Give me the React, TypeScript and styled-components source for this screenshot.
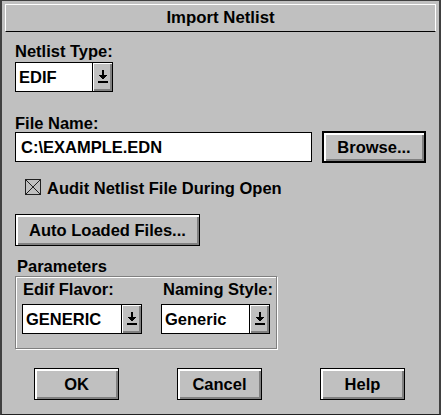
import React from "react";
import styled, { createGlobalStyle } from "styled-components";

const Global = createGlobalStyle`
  html, body { margin: 0; padding: 0; background: #c0c0c0; }
  * { box-sizing: border-box; }
`;

const Window = styled.div`
  width: 441px;
  height: 415px;
  background: #c0c0c0;
  border-top: 1px solid #404040;
  border-bottom: 1px solid #202020;
  border-left: 2px solid #404040;
  border-right: 2px solid #404040;
  font-family: "Liberation Sans", Arial, sans-serif;
  font-weight: bold;
  font-size: 16.5px;
  line-height: 18px;
  color: #000;
  display: flex;
  flex-direction: column;
`;

const TitleBar = styled.div`
  margin: 3px 3px 0 3px;
  height: 28px;
  border-top: 1px solid #fff;
  border-left: 1px solid #fff;
  border-right: 1px solid #fff;
  border-bottom: 1px solid #000;
  display: flex;
  align-items: center;
  justify-content: center;
  font-size: 16.8px;
`;

const Content = styled.div`
  display: flex;
  flex-direction: column;
  align-items: flex-start;
  padding-left: 13px;
`;

const Label = styled.div<{ $mt?: number; $ml?: number }>`
  margin-top: ${(p) => p.$mt ?? 0}px;
  margin-left: ${(p) => p.$ml ?? 0}px;
  height: 18px;
  white-space: nowrap;
`;

const SelectBox = styled.div<{ $w: number; $mt?: number }>`
  width: ${(p) => p.$w}px;
  height: 30px;
  margin-top: ${(p) => p.$mt ?? 0}px;
  border: 1px solid #000;
  background: #fff;
  display: flex;
`;

const SelectText = styled.div`
  flex: 1;
  padding-left: 3px;
  display: flex;
  align-items: center;
  white-space: nowrap;
`;

const SelectButton = styled.div`
  width: 20px;
  border-left: 1px solid #000;
  background: #c0c0c0;
  box-shadow: inset 1px 1px 0 #fff, inset -2px -2px 0 #808080;
  display: flex;
  align-items: center;
  justify-content: center;
  padding-bottom: 1px;
`;

const Row = styled.div<{ $mt?: number }>`
  display: flex;
  align-items: center;
  margin-top: ${(p) => p.$mt ?? 0}px;
`;

const TextField = styled.div`
  width: 297px;
  height: 30px;
  border: 1px solid #000;
  background: #fff;
  padding-left: 5px;
  display: flex;
  align-items: center;
`;

const Button = styled.div<{ $w: number; $default?: boolean; $mt?: number; $ml?: number }>`
  width: ${(p) => p.$w}px;
  height: 32px;
  margin-top: ${(p) => p.$mt ?? 0}px;
  margin-left: ${(p) => p.$ml ?? 0}px;
  border: ${(p) => (p.$default ? 2 : 1)}px solid #000;
  background: #c0c0c0;
  box-shadow: inset 1px 1px 0 #fff, inset 2px 2px 0 #fff, inset -2px -2px 0 #808080;
  display: flex;
  align-items: center;
  justify-content: center;
  white-space: nowrap;
`;

const CheckRow = styled.div`
  display: flex;
  align-items: flex-start;
  gap: 6px;
  margin-top: 16px;
  margin-left: 10px;
  height: 18px;
`;

const GroupBox = styled.div`
  margin-top: 1px;
  width: 262px;
  height: 73px;
  border: 1px solid #808080;
  box-shadow: inset 1px 1px 0 #fff, 1px 1px 0 #fff;
  padding: 3px 0 0 6px;
  display: flex;
  gap: 19px;
`;

const Column = styled.div`
  display: flex;
  flex-direction: column;
`;

const ButtonRow = styled.div`
  display: flex;
  gap: 58px;
  margin-top: 19px;
  margin-left: 19px;
`;

const Arrow = () => (
  <svg width="10" height="13" viewBox="0 0 10 13" shapeRendering="crispEdges">
    <rect x="4" y="0" width="2" height="5" fill="#000" />
    <polygon points="0.5,5 9.5,5 5,9.5" fill="#000" />
    <rect x="0" y="11" width="10" height="1.5" fill="#000" />
  </svg>
);

const CheckGlyph = () => (
  <svg width="16" height="16" viewBox="0 0 16 16" shapeRendering="crispEdges">
    <rect x="0.5" y="0.5" width="15" height="15" fill="none" stroke="#202020" strokeWidth="1" />
    <line x1="1" y1="1" x2="15" y2="15" stroke="#202020" strokeWidth="1" shapeRendering="auto" />
    <line x1="15" y1="1" x2="1" y2="15" stroke="#202020" strokeWidth="1" shapeRendering="auto" />
  </svg>
);

const Select = ({ value, w, mt }: { value: string; w: number; mt?: number }) => (
  <SelectBox $w={w} $mt={mt}>
    <SelectText>{value}</SelectText>
    <SelectButton>
      <Arrow />
    </SelectButton>
  </SelectBox>
);

export default function App() {
  return (
    <>
      <Global />
      <Window>
        <TitleBar>Import Netlist</TitleBar>
        <Content>
          <Label $mt={10}>Netlist Type:</Label>
          <Select value="EDIF" w={98} mt={2} />
          <Label $mt={22}>File Name:</Label>
          <Row $mt={-1}>
            <TextField>C:\EXAMPLE.EDN</TextField>
            <Button $w={104} $default $ml={10}>
              Browse...
            </Button>
          </Row>
          <CheckRow>
            <CheckGlyph />
            <span>Audit Netlist File During Open</span>
          </CheckRow>
          <Button $w={185} $mt={17}>
            Auto Loaded Files...
          </Button>
          <Label $mt={11} $ml={2}>
            Parameters
          </Label>
          <GroupBox>
            <Column>
              <Label $ml={1}>Edif Flavor:</Label>
              <Select value="GENERIC" w={120} mt={6} />
            </Column>
            <Column>
              <Label $ml={2}>Naming Style:</Label>
              <Select value="Generic" w={109} mt={6} />
            </Column>
          </GroupBox>
          <ButtonRow>
            <Button $w={85}>OK</Button>
            <Button $w={85}>Cancel</Button>
            <Button $w={85}>Help</Button>
          </ButtonRow>
        </Content>
      </Window>
    </>
  );
}
